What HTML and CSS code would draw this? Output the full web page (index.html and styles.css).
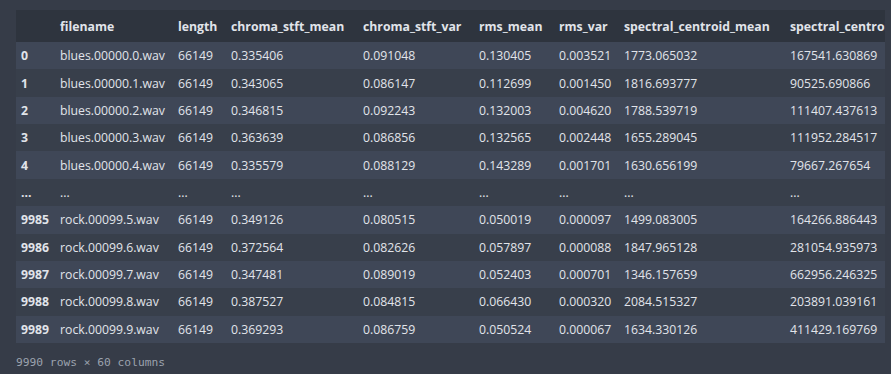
FILE: index.html
```html
<!DOCTYPE html>
<html>
<head>
<meta charset="utf-8">
<link rel="stylesheet" href="styles.css">
</head>
<body>
<div class="output">
  <div class="scroller">
    <table class="df">
      <colgroup>
        <col class="c-idx"><col class="c-fn"><col class="c-len"><col class="c-csm"><col class="c-csv"><col class="c-rm"><col class="c-rv"><col class="c-scm"><col class="c-scv">
      </colgroup>
      <thead>
        <tr><th></th><th>filename</th><th>length</th><th>chroma_stft_mean</th><th>chroma_stft_var</th><th>rms_mean</th><th>rms_var</th><th>spectral_centroid_mean</th><th>spectral_centroid_var</th></tr>
      </thead>
      <tbody>
        <tr><th>0</th><td>blues.00000.0.wav</td><td>66149</td><td>0.335406</td><td>0.091048</td><td>0.130405</td><td>0.003521</td><td>1773.065032</td><td>167541.630869</td></tr>
        <tr><th>1</th><td>blues.00000.1.wav</td><td>66149</td><td>0.343065</td><td>0.086147</td><td>0.112699</td><td>0.001450</td><td>1816.693777</td><td>90525.690866</td></tr>
        <tr><th>2</th><td>blues.00000.2.wav</td><td>66149</td><td>0.346815</td><td>0.092243</td><td>0.132003</td><td>0.004620</td><td>1788.539719</td><td>111407.437613</td></tr>
        <tr><th>3</th><td>blues.00000.3.wav</td><td>66149</td><td>0.363639</td><td>0.086856</td><td>0.132565</td><td>0.002448</td><td>1655.289045</td><td>111952.284517</td></tr>
        <tr><th>4</th><td>blues.00000.4.wav</td><td>66149</td><td>0.335579</td><td>0.088129</td><td>0.143289</td><td>0.001701</td><td>1630.656199</td><td>79667.267654</td></tr>
        <tr><th>...</th><td>...</td><td>...</td><td>...</td><td>...</td><td>...</td><td>...</td><td>...</td><td>...</td></tr>
        <tr><th>9985</th><td>rock.00099.5.wav</td><td>66149</td><td>0.349126</td><td>0.080515</td><td>0.050019</td><td>0.000097</td><td>1499.083005</td><td>164266.886443</td></tr>
        <tr><th>9986</th><td>rock.00099.6.wav</td><td>66149</td><td>0.372564</td><td>0.082626</td><td>0.057897</td><td>0.000088</td><td>1847.965128</td><td>281054.935973</td></tr>
        <tr><th>9987</th><td>rock.00099.7.wav</td><td>66149</td><td>0.347481</td><td>0.089019</td><td>0.052403</td><td>0.000701</td><td>1346.157659</td><td>662956.246325</td></tr>
        <tr><th>9988</th><td>rock.00099.8.wav</td><td>66149</td><td>0.387527</td><td>0.084815</td><td>0.066430</td><td>0.000320</td><td>2084.515327</td><td>203891.039161</td></tr>
        <tr><th>9989</th><td>rock.00099.9.wav</td><td>66149</td><td>0.369293</td><td>0.086759</td><td>0.050524</td><td>0.000067</td><td>1634.330126</td><td>411429.169769</td></tr>
      </tbody>
    </table>
  </div>
  <p class="shape">9990 rows × 60 columns</p>
</div>
</body>
</html>
```
FILE: styles.css
```css
html, body {
  margin: 0;
  padding: 0;
  background: #363c48;
}

.output {
  padding: 10px 6px 0 16px;
}

.scroller {
  width: 869px;
  overflow: hidden;
}

.df {
  border-collapse: collapse;
  table-layout: fixed;
  width: 1000px;
  font-family: "Open Sans", "Noto Sans", sans-serif;
  font-size: 12.25px;
  color: #e1e4ea;
}

.c-idx { width: 39px; }
.c-fn { width: 118px; }
.c-len { width: 53px; }
.c-csm { width: 132px; }
.c-csv { width: 116px; }
.c-rm { width: 80px; }
.c-rv { width: 65px; }
.c-scm { width: 166px; }
.c-scv { width: 231px; }

.df th, .df td {
  padding: 0 4px 0 5px;
  text-align: left;
  white-space: nowrap;
  overflow: hidden;
}

.df thead tr {
  background: #2e343e;
  height: 32px;
}

.df thead th {
  font-weight: 700;
}

.df tbody tr {
  height: 27.36px;
  background: #383f4b;
}

.df tbody tr:nth-child(odd) {
  background: #3f4757;
}

.df tbody th {
  font-weight: 700;
}

.shape {
  margin: 13px 0 0 0;
  font-family: "DejaVu Sans Mono", "Liberation Mono", monospace;
  font-size: 11.25px;
  color: #9ba2ae;
}
```
